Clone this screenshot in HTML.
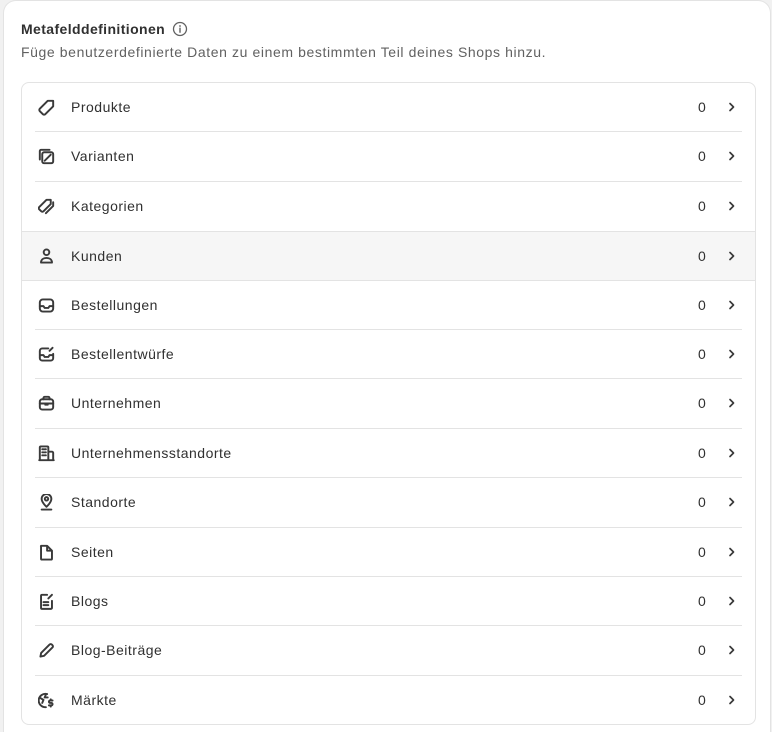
<!DOCTYPE html>
<html><head><meta charset="utf-8"><style>
*{box-sizing:border-box;margin:0;padding:0}
html,body{width:772px;height:732px;overflow:hidden}
body{background:#f1f1f1;font-family:"Liberation Sans",sans-serif;position:relative}
.card{position:absolute;left:4px;top:1px;width:766px;height:745px;background:#fff;border-radius:12px;box-shadow:0 0 0 1px #e3e3e3}
.t{position:absolute;left:17px;top:20px;font-size:14px;font-weight:bold;color:#303030;letter-spacing:0.4px}
.t svg{vertical-align:-3px;margin-left:7px}
.s{position:absolute;left:17px;top:43px;font-size:14px;color:#616161;letter-spacing:0.6px}
.list{position:absolute;left:17px;top:81px;width:735px;height:643px;border:1px solid #e3e3e3;border-radius:8px;overflow:hidden}
.row{position:absolute;left:0;width:733px;height:49.4px}
.row.hl{background:#f6f6f6;border-top:1px solid #e3e3e3;border-bottom:1px solid #e3e3e3}
.row .line{position:absolute;left:13px;right:13px;bottom:0;height:1px;background:#e3e3e3}
.row.hl .line,.row.pre .line{display:none}
.row svg.i{position:absolute;left:16px;top:16px}
.row .n{position:absolute;left:49px;top:16px;font-size:14px;color:#303030;letter-spacing:0.5px}
.row .c{position:absolute;left:676px;top:16px;font-size:14px;color:#303030}
.row svg.ch{position:absolute;left:703px;top:17px}
</style></head><body>
<div class="card">
<div class="t">Metafelddefinitionen<svg width="16" height="16" viewBox="0 0 16 16"><circle cx="8" cy="8" r="6.5" fill="none" stroke="#616161" stroke-width="1.3"/><circle cx="8" cy="5" r=".9" fill="#616161"/><path d="M8 7.2v4" stroke="#616161" stroke-width="1.4" stroke-linecap="round"/></svg></div>
<div class="s">Füge benutzerdefinierte Daten zu einem bestimmten Teil deines Shops hinzu.</div>
<div class="list" id="l"></div>
</div>
<script>
var items=[["Produkte",'<path d="M3 9.5 9.5 3H14v4.5L7.5 14a1.4 1.4 0 0 1-2 0L3 11.5a1.4 1.4 0 0 1 0-2z"/>'],
["Varianten",'<rect x="5" y="5" width="9" height="9" rx="1.5"/><path d="M3 11V4a1 1 0 0 1 1-1h7M7 12l5-5"/>'],
["Kategorien",'<path d="M2.5 9 8.5 3H12v3.5L6 12.5a1.3 1.3 0 0 1-1.8 0L2.5 10.8a1.3 1.3 0 0 1 0-1.8zM14 5v3l-6 6"/>'],
["Kunden",'<circle cx="8.5" cy="5" r="2.3"/><path d="M4 13.5c0-2.5 2-3.8 4.5-3.8s4.5 1.3 4.5 3.8z"/>'],
["Bestellungen",'<rect x="3" y="3.5" width="11" height="10" rx="2.5"/><path d="M3 9h3l1 1.5h3L11 9h3"/>'],
["Bestellentwürfe",'<path d="M10 3.5H5a2 2 0 0 0-2 2v6a2 2 0 0 0 2 2h7a2 2 0 0 0 2-2V8M3 9h3l1 1.5h3L11 9h3M11 5.5l2.5-2.5"/>'],
["Unternehmen",'<rect x="3" y="5" width="11" height="8.5" rx="2"/><path d="M6 5V4a1 1 0 0 1 1-1h3a1 1 0 0 1 1 1v1M3 8.5h11M7.5 9.5h2"/>'],
["Unternehmensstandorte",'<path d="M3 14V3.5a.8.8 0 0 1 .8-.8h5.4a.8.8 0 0 1 .8.8V14M10 7h3a1 1 0 0 1 1 1v6M2.5 14h12M5 5h1M7 5h1M5 7.5h1M7 7.5h1M5 10h1M7 10h1"/>'],
["Standorte",'<path d="M8.5 12s4-3.5 4-6.5a4 4 0 0 0-8 0c0 3 4 6.5 4 6.5z"/><circle cx="8.5" cy="5.5" r="1.4"/><path d="M4.5 14.3h8"/>'],
["Seiten",'<path d="M4 3h5l4 4v6.5a.8.8 0 0 1-.8.8H4.8a.8.8 0 0 1-.8-.8V3.8A.8.8 0 0 1 4 3zM9 3v4h4"/>'],
["Blogs",'<path d="M9 3H4.8a.8.8 0 0 0-.8.8v10a.8.8 0 0 0 .8.8h7.4a.8.8 0 0 0 .8-.8V8M6 9h4M6 11.5h4M10 6l3-3"/>'],
["Blog-Beiträge",'<path d="M3.5 13.5l.6-3L11 3.6a1.3 1.3 0 0 1 1.9 0l.5.5a1.3 1.3 0 0 1 0 1.9L6.5 12.9z"/>'],
["Märkte",'<path d="M9 3.2A5.5 5.5 0 1 0 8 14M3.5 6.5 6 8l-1 2.5M8 3.5 7 6h2.5"/><path d="M13.5 8.5h-2a1 1 0 0 0 0 2h1a1 1 0 0 1 0 2h-2M12 7.5v1M12 12.5v1"/>']];
var h='',H=49.4;
items.forEach(function(it,i){
var cls='row'+(i==3?' hl':'')+(i==2?' pre':'');
h+='<div class="'+cls+'" style="top:'+(i*H)+'px"><svg class="i" width="17" height="17" viewBox="1.5 1.5 14 14" fill="none" stroke="#3a3a3a" stroke-width="1.6" stroke-linecap="round" stroke-linejoin="round">'+it[1]+'</svg><span class="n">'+it[0]+'</span><span class="c">0</span><svg class="ch" width="14" height="14" viewBox="0 0 14 14"><path d="M5 3.5 8.5 7 5 10.5" fill="none" stroke="#3a3a3a" stroke-width="1.7" stroke-linecap="round" stroke-linejoin="round"/></svg>'+(i<12?'<div class="line"></div>':'')+'</div>';});
document.getElementById('l').innerHTML=h;
</script>
</body></html>
